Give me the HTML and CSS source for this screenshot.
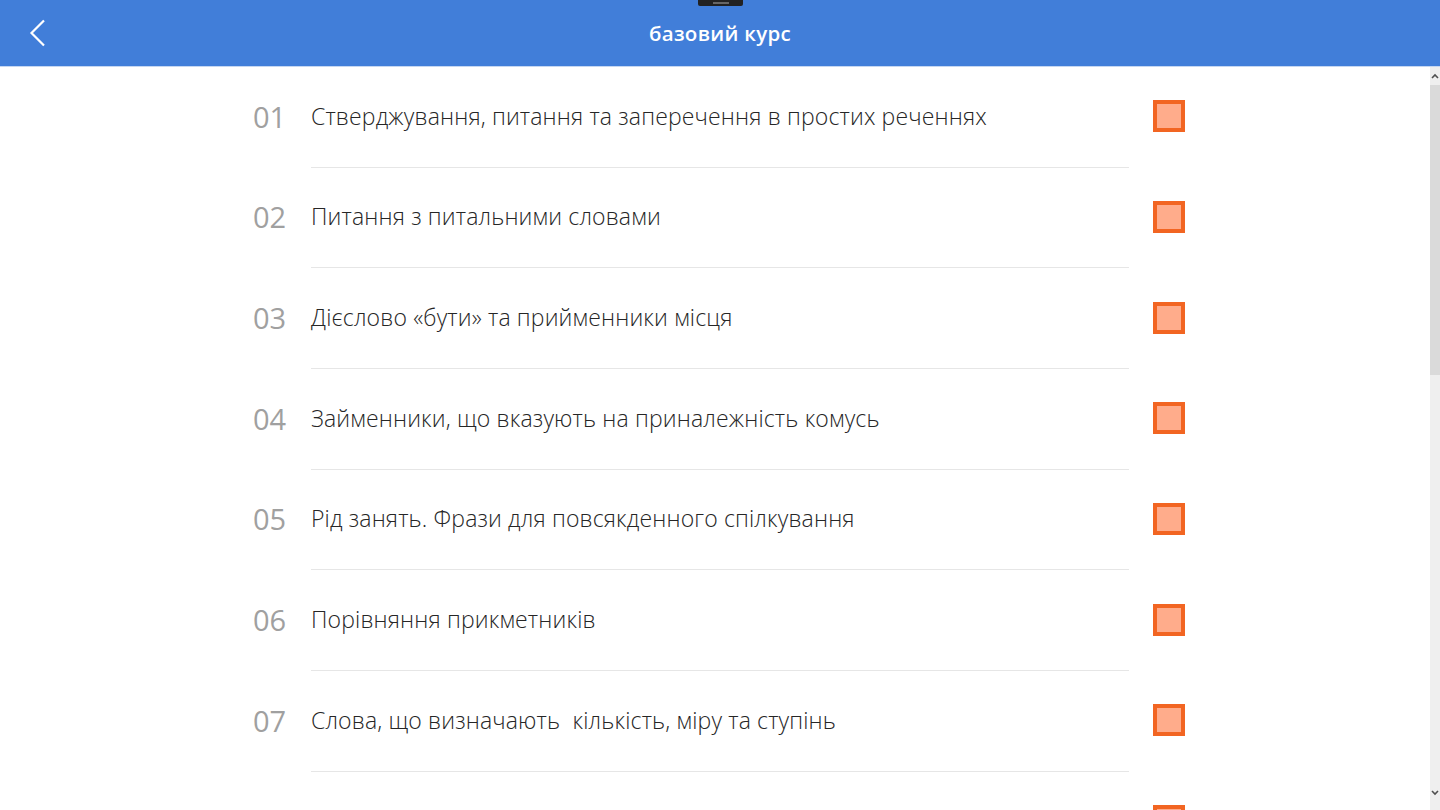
FILE: index.html
```html
<!DOCTYPE html>
<html lang="uk">
<head>
    <meta charset="UTF-8">
    <meta name="viewport" content="width=device-width, initial-scale=1.0">
    <title>базовий курс</title>
    <link rel="stylesheet" href="styles.css">
</head>
<body>
    <div class="header">
        <div class="notch"></div>
        <button class="back" aria-label="Назад">
            <svg width="18" height="28" viewBox="0 0 18 28"><path d="M15 1.5 L2.5 14 L15 26.5" fill="none" stroke="#fff" stroke-width="2.2"/></svg>
        </button>
        <div class="title">базовий курс</div>
    </div>
    <div class="main">
        <div class="list">
            <div class="row">
                <div class="num">01</div>
                <div class="text">Стверджування, питання та заперечення в простих реченнях</div>
                <div class="check"></div>
            </div>
            <div class="row">
                <div class="num">02</div>
                <div class="text">Питання з питальними словами</div>
                <div class="check"></div>
            </div>
            <div class="row">
                <div class="num">03</div>
                <div class="text">Дієслово «бути» та прийменники місця</div>
                <div class="check"></div>
            </div>
            <div class="row">
                <div class="num">04</div>
                <div class="text">Займенники, що вказують на приналежність комусь</div>
                <div class="check"></div>
            </div>
            <div class="row">
                <div class="num">05</div>
                <div class="text">Рід занять. Фрази для повсякденного спілкування</div>
                <div class="check"></div>
            </div>
            <div class="row">
                <div class="num">06</div>
                <div class="text">Порівняння прикметників</div>
                <div class="check"></div>
            </div>
            <div class="row">
                <div class="num">07</div>
                <div class="text">Слова, що визначають&nbsp; кількість, міру та ступінь</div>
                <div class="check"></div>
            </div>
            <div class="row">
                <div class="num"></div>
                <div class="text"></div>
                <div class="check"></div>
            </div>
        </div>
        <div class="scrollbar">
            <div class="arrow up">
                <svg width="8" height="6" viewBox="0 0 8 6"><path d="M1 5 L4 2 L7 5" fill="none" stroke="#505050" stroke-width="1.6"/></svg>
            </div>
            <div class="thumb"></div>
            <div class="track"></div>
            <div class="arrow down">
                <svg width="8" height="6" viewBox="0 0 8 6"><path d="M1 1 L4 4 L7 1" fill="none" stroke="#505050" stroke-width="1.6"/></svg>
            </div>
        </div>
    </div>
</body>
</html>
```

FILE: styles.css
```css
html, body { margin: 0; height: 100%; overflow: hidden; }
body {
    display: flex;
    flex-direction: column;
    background-color: #fff;
    font-family: "Open Sans", "Liberation Sans", sans-serif;
}
.header {
    position: relative;
    height: 66px;
    flex: none;
    background-color: #417ed9;
    display: flex;
    align-items: center;
    justify-content: center;
    border-bottom: 1px solid #c5d7f2;
}
.notch {
    position: absolute;
    top: 0;
    left: 698px;
    width: 45px;
    height: 6px;
    background-color: #222;
    border-radius: 0 0 2px 2px;
}
.notch::after {
    content: "";
    display: block;
    width: 16px;
    height: 2px;
    margin: 2px auto 0;
    background-color: #666;
}
.back {
    position: absolute;
    left: 29px;
    top: 19px;
    padding: 0;
    border: none;
    background: none;
    cursor: pointer;
}
.back svg { display: block; }
.title { color: #fff; font-size: 20.5px; font-weight: 600; letter-spacing: 0.3px; margin-top: -1px; }

.main { flex: 1; display: flex; min-height: 0; }
.list { flex: 1; overflow: hidden; padding-left: 253px; }
.row { display: flex; align-items: stretch; height: 100.67px; }
.num {
    width: 58px;
    font-size: 29px;
    color: #a0a0a0;
    display: flex;
    align-items: center;
    margin-top: -2px;
}
.text {
    width: 818px;
    border-bottom: 1px solid #e6e6e6;
    display: flex;
    align-items: center;
    padding-bottom: 2px;
    box-sizing: border-box;
    font-size: 23px;
    font-weight: 300;
    letter-spacing: 0.15px;
    color: #262626;
    white-space: pre;
}
.check {
    align-self: center;
    margin-left: 24px;
    width: 24px;
    height: 24px;
    border: 4px solid #f26522;
    background-color: #ffac8b;
    margin-bottom: 2px;
}

.scrollbar {
    width: 10px;
    flex: none;
    display: flex;
    flex-direction: column;
    background-color: #efefef;
}
.arrow { height: 18px; display: flex; align-items: center; justify-content: center; }
.arrow.down { height: 24px; align-items: flex-start; padding-top: 4px; box-sizing: border-box; }
.thumb { height: 290px; background-color: #dadada; }
.track { flex: 1; }
```
